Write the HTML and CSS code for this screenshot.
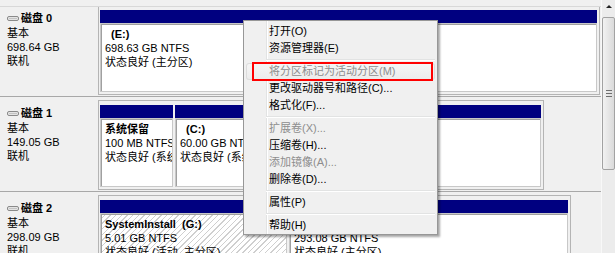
FILE: index.html
```html
<!DOCTYPE html>
<html lang="zh-CN">
<head>
    <meta charset="UTF-8">
    <title>磁盘管理</title>
    <link rel="stylesheet" href="styles.css">
</head>
<body>

    <div class="screen">
        <div class="view">
            <div class="top-strip"></div>

            <div class="rows">
                <!-- 磁盘 0 -->
                <div class="disk-row first">
                    <div class="disk-label">
                        <div class="disk-name">
                            <svg class="disk-icon" width="12" height="5" viewBox="0 0 12 5"><rect x="0.5" y="0.5" width="11" height="4" rx="1.5" fill="#e4e4e4" stroke="#8a8a8a"/><rect x="2" y="2" width="8" height="1" fill="#c4c4c4"/></svg>
                            磁盘 0
                        </div>
                        <div>基本</div>
                        <div>698.64 GB</div>
                        <div>联机</div>
                    </div>
                    <div class="disk-area">
                        <div class="disk-box" style="width: 502px;">
                            <div class="part" style="flex: 1;">
                                <div class="part-bar"></div>
                                <div class="part-body">
                                    <div class="part-title">  (E:)</div>
                                    <div>698.63 GB NTFS</div>
                                    <div>状态良好 (主分区)</div>
                                </div>
                            </div>
                        </div>
                    </div>
                </div>

                <!-- 磁盘 1 -->
                <div class="disk-row">
                    <div class="disk-label">
                        <div class="disk-name">
                            <svg class="disk-icon" width="12" height="5" viewBox="0 0 12 5"><rect x="0.5" y="0.5" width="11" height="4" rx="1.5" fill="#e4e4e4" stroke="#8a8a8a"/><rect x="2" y="2" width="8" height="1" fill="#c4c4c4"/></svg>
                            磁盘 1
                        </div>
                        <div>基本</div>
                        <div>149.05 GB</div>
                        <div>联机</div>
                    </div>
                    <div class="disk-area">
                        <div class="disk-box" style="width: 446px;">
                            <div class="part" style="width: 73px;">
                                <div class="part-bar"></div>
                                <div class="part-body">
                                    <div class="part-title">系统保留</div>
                                    <div>100 MB NTFS</div>
                                    <div>状态良好 (系统, 活动, 主分区)</div>
                                </div>
                            </div>
                            <div class="part" style="flex: 1;">
                                <div class="part-bar"></div>
                                <div class="part-body">
                                    <div class="part-title">  (C:)</div>
                                    <div>60.00 GB NTFS</div>
                                    <div>状态良好 (系统,启动,页面文件,活动,故障转储,主分区)</div>
                                </div>
                            </div>
                        </div>
                    </div>
                </div>

                <!-- 磁盘 2 -->
                <div class="disk-row">
                    <div class="disk-label">
                        <div class="disk-name">
                            <svg class="disk-icon" width="12" height="5" viewBox="0 0 12 5"><rect x="0.5" y="0.5" width="11" height="4" rx="1.5" fill="#e4e4e4" stroke="#8a8a8a"/><rect x="2" y="2" width="8" height="1" fill="#c4c4c4"/></svg>
                            磁盘 2
                        </div>
                        <div>基本</div>
                        <div>298.09 GB</div>
                        <div>联机</div>
                    </div>
                    <div class="disk-area">
                        <div class="disk-box" style="width: 473px;">
                            <div class="part" style="width: 187px;">
                                <div class="part-bar"></div>
                                <div class="part-body hatched">
                                    <div class="part-title">SystemInstall  (G:)</div>
                                    <div>5.01 GB NTFS</div>
                                    <div>状态良好 (活动, 主分区)</div>
                                </div>
                            </div>
                            <div class="part" style="flex: 1;">
                                <div class="part-bar"></div>
                                <div class="part-body">
                                    <div class="part-title">  (D:)</div>
                                    <div>293.08 GB NTFS</div>
                                    <div>状态良好 (主分区)</div>
                                </div>
                            </div>
                        </div>
                    </div>
                </div>
            </div>

            <!-- Context menu -->
            <div class="menu">
                <div class="menu-item">打开(O)</div>
                <div class="menu-item">资源管理器(E)</div>
                <div class="menu-sep"></div>
                <div class="menu-item disabled hover">将分区标记为活动分区(M)<span class="mark"></span></div>
                <div class="menu-item">更改驱动器号和路径(C)...</div>
                <div class="menu-item">格式化(F)...</div>
                <div class="menu-sep"></div>
                <div class="menu-item disabled">扩展卷(X)...</div>
                <div class="menu-item">压缩卷(H)...</div>
                <div class="menu-item disabled">添加镜像(A)...</div>
                <div class="menu-item">删除卷(D)...</div>
                <div class="menu-sep"></div>
                <div class="menu-item">属性(P)</div>
                <div class="menu-sep"></div>
                <div class="menu-item">帮助(H)</div>
            </div>
        </div>

        <div class="scrollbar">
            <div class="scroll-up"><span class="arrow"></span></div>
            <div class="scroll-thumb"><span class="grip"></span></div>
        </div>
    </div>

</body>
</html>
```

FILE: styles.css
```css
body {
    margin: 0;
    font-family: "Liberation Sans", "Noto Sans CJK SC", sans-serif;
    font-size: 11px;
    color: #000;
    background-color: #f0f0f0;
}

.screen {
    display: flex;
    height: 253px;
    overflow: hidden;
}

.view {
    flex: 1;
    position: relative;
    overflow: hidden;
    display: flex;
    flex-direction: column;
}

.top-strip {
    height: 6px;
    flex-shrink: 0;
    border-bottom: 1px solid #d8d8d8;
}

.rows {
    flex: 1;
    overflow: hidden;
}

/* rows */
.disk-row {
    display: flex;
    height: 94px;
    border-bottom: 1px solid #a8a8a8;
}

.disk-row.first {
    margin-top: -5px;
}

.disk-label {
    width: 97px;
    flex-shrink: 0;
    box-sizing: border-box;
    padding: 8px 0 0 7px;
    line-height: 14px;
}

.disk-name {
    display: flex;
    align-items: center;
    gap: 2px;
    font-weight: bold;
    line-height: 16px;
}

.disk-icon {
    display: block;
}

.disk-area {
    flex: 1;
    padding: 3px 0 1px 1px;
    min-width: 0;
}

.disk-box {
    display: flex;
    gap: 2px;
    box-sizing: border-box;
    height: 90px;
    padding: 4px 2px 2px 1px;
    border: 1px solid #b4b4b4;
}

.part {
    display: flex;
    flex-direction: column;
    min-width: 0;
}

.part-bar {
    height: 13px;
    flex-shrink: 0;
    background-color: #000080;
}

.part-body {
    flex: 1;
    padding: 3px 4px 0;
    background-color: #fff;
    border: 1px solid #c8c8c8;
    box-shadow: inset 1px 1px 0 #a0a0a0;
    overflow: hidden;
    white-space: nowrap;
    line-height: 14px;
}

.part-body.hatched {
    background: repeating-linear-gradient(135deg, #fff 0 3px, #cfcfcf 3px 4px);
}

.part-title {
    font-weight: bold;
    white-space: pre;
}

/* context menu */
.menu {
    position: absolute;
    left: 243px;
    top: 20px;
    width: 195px;
    box-sizing: border-box;
    padding: 2px 2px 0;
    background-color: #f0f0f0;
    border: 1px solid #979797;
    box-shadow: 2px 2px 2px rgba(0, 0, 0, 0.35);
}

.menu::before {
    content: "";
    position: absolute;
    left: 22px;
    top: 0;
    bottom: 0;
    width: 1px;
    background-color: #e2e3e3;
    border-right: 1px solid #fff;
}

.menu-item {
    position: relative;
    height: 17px;
    line-height: 17px;
    padding-left: 23px;
    white-space: nowrap;
}

.menu-item.disabled {
    color: #8d8d8d;
}

.menu-item.hover {
    background: linear-gradient(#f6f6f6, #ebebeb);
    border-radius: 3px;
    box-shadow: inset 0 0 0 1px #dcdcdc;
}

.mark {
    position: absolute;
    left: 6px;
    top: -1px;
    width: 181px;
    height: 19px;
    box-sizing: border-box;
    border: 2px solid #f00;
}

.menu-sep {
    height: 6px;
    position: relative;
}

.menu-sep::after {
    content: "";
    position: absolute;
    left: 20px;
    right: 0;
    top: 2px;
    height: 1px;
    background-color: #e2e3e3;
    border-bottom: 1px solid #fff;
}

/* scrollbar */
.scrollbar {
    width: 13px;
    flex-shrink: 0;
    background-color: #ececec;
    border-left: 1px solid #f8f8f8;
}

.scroll-up {
    height: 16px;
    display: flex;
    justify-content: center;
    padding-top: 5px;
    box-sizing: border-box;
}

.arrow {
    width: 0;
    height: 0;
    border-left: 3px solid transparent;
    border-right: 3px solid transparent;
    border-bottom: 3px solid #222;
}

.scroll-thumb {
    height: 153px;
    margin: 1px 0 0;
    box-sizing: border-box;
    border: 1px solid #a2a2a2;
    border-radius: 2px;
    background: linear-gradient(to right, #f2f2f2, #dadada);
    display: flex;
    align-items: center;
    justify-content: center;
}

.grip {
    width: 6px;
    height: 7px;
    background: repeating-linear-gradient(to bottom, #6e6e6e 0 1px, transparent 1px 3px);
}
```
